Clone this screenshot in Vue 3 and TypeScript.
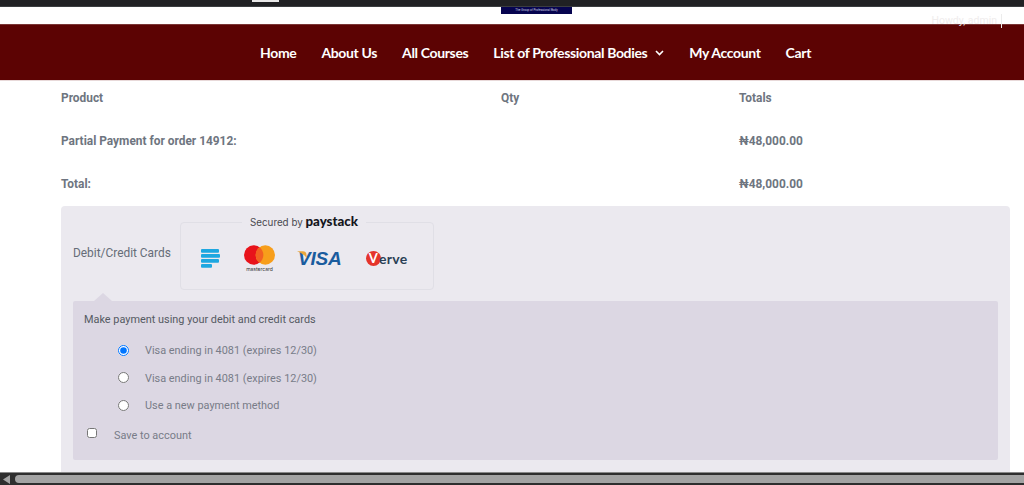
<script setup lang="ts">
const navItems = ['Home', 'About Us', 'All Courses']
const rows = [
  { name: 'Partial Payment for order 14912:', amount: '₦48,000.00' },
  { name: 'Total:', amount: '₦48,000.00' },
]
const options = [
  { label: 'Visa ending in 4081 (expires 12/30)', checked: true },
  { label: 'Visa ending in 4081 (expires 12/30)', checked: false },
  { label: 'Use a new payment method', checked: false },
]
</script>

<template>
  <div class="page">
    <div class="chrome"><i class="tab"></i></div>
    <div class="brand">
      <div class="logo"><span>The Group of Professional Body</span></div>
      <span class="howdy">Howdy, admin</span>
    </div>
    <nav class="nav">
      <a v-for="item in navItems" :key="item">{{ item }}</a>
      <a class="drop">List of Professional Bodies
        <svg width="9" height="6" viewBox="0 0 9 6"><path d="M1 1l3.500 3.500L8 1" fill="none" stroke="#fff" stroke-width="1.600" /></svg>
      </a>
      <a>My Account</a>
      <a>Cart</a>
    </nav>
    <main class="main">
      <div class="row head"><span>Product</span><span>Qty</span><span>Totals</span></div>
      <div v-for="r in rows" :key="r.name" class="row"><span>{{ r.name }}</span><span></span><span>{{ r.amount }}</span></div>
      <section class="pay">
        <div class="method">
          <span class="method-label">Debit/Credit Cards</span>
          <div class="secured">
            <div class="secured-title">Secured by <b>paystack</b></div>
            <div class="cards">
              <svg class="stack" width="19" height="19" viewBox="0 0 19 19">
                <g fill="#1ea7e0">
                  <rect x="0" y="0" width="18" height="3.800" rx="1" />
                  <rect x="0" y="5" width="19" height="3.800" rx="1" />
                  <rect x="0" y="10" width="18" height="3.800" rx="1" />
                  <rect x="0" y="15" width="11" height="3.800" rx="1" />
                </g>
              </svg>
              <div class="mc">
                <svg width="31" height="20" viewBox="0 0 32 20">
                  <circle cx="10" cy="10" r="10" fill="#e8131b" />
                  <circle cx="22" cy="10" r="10" fill="#f79e1b" />
                  <path d="M16 2a10 10 0 0 1 0 16a10 10 0 0 1 0-16z" fill="#f26122" />
                </svg>
                <span>mastercard</span>
              </div>
              <div class="visa"><svg class="flick" width="10" height="8" viewBox="0 0 12 9"><path d="M0 0h7.500q2.500 0 3.500 2l1 7q-3-6-12-9z" fill="#e9a63a" /></svg><span>VISA</span></div>
              <div class="verve"><i>V</i><span>erve</span></div>
            </div>
          </div>
        </div>
        <div class="panel">
          <p class="intro">Make payment using your debit and credit cards</p>
          <label v-for="(o, i) in options" :key="i" class="option">
            <input type="radio" name="card" :checked="o.checked" />
            <span>{{ o.label }}</span>
          </label>
          <label class="save">
            <input type="checkbox" />
            <span>Save to account</span>
          </label>
        </div>
      </section>
    </main>
    <div class="scrollbar">
      <svg width="8" height="9" viewBox="0 0 8 9"><path d="M7 0v9L0 4.500z" fill="#a3a3a3" /></svg>
      <div class="thumb"></div>
    </div>
  </div>
</template>

<style>
html, body { margin: 0; overflow: hidden; }
</style>

<style scoped>
.page {
  width: 1024px;
  height: 485px;
  display: flex;
  flex-direction: column;
  overflow: hidden;
  background: #fff;
  font-family: Roboto, "Liberation Sans", sans-serif;
  position: relative;
}
.chrome { height: 6px; background: #202124; flex: none; border-bottom: 1px solid #3a3d40; position: relative; }
.tab { position: absolute; left: 252px; top: 0; width: 27px; height: 2px; background: #e8e8e8; }
.brand { height: 17px; flex: none; display: flex; justify-content: center; position: relative; }
.logo {
  width: 71px;
  height: 7px;
  margin-left: 49px;
  background: #06044f;
  color: #cfcfe0;
  font-size: 3px;
  line-height: 7px;
  text-align: center;
  overflow: hidden;
  white-space: nowrap;
}
.howdy {
  position: absolute;
  right: 22px;
  top: 7px;
  padding-right: 4px;
  border-right: 1px solid #ececec;
  font-size: 10.500px;
  color: #f0eded;
  line-height: 14px;
}
.nav {
  flex: none;
  background: #5c0303;
  border-top: 1px solid #7a3535;
  border-bottom: 1px solid #e8d9d9;
  box-sizing: border-box;
  height: 57px;
  display: flex;
  align-items: center;
  justify-content: center;
  gap: 25px;
  padding-left: 47px;
  font-family: Lato, sans-serif;
  font-weight: 700;
  font-size: 14px;
  letter-spacing: -.35px;
  color: #fff;
}
.drop { display: flex; align-items: center; gap: 8px; }
.main { flex: 1; min-height: 0; padding-left: 61px; padding-right: 14px; overflow: hidden; }
.row {
  display: grid;
  grid-template-columns: 440px 238px 1fr;
  height: 43px;
  align-items: center;
  font-size: 11.900px;
  font-weight: 700;
  color: #6e7580;
}
.row.head { height: 34px; margin-bottom: 4px; }
.pay {
  margin-top: 1px;
  background: #ebe9ef;
  border-radius: 4px;
  padding: 16px 12px 0;
  height: 280px;
  box-sizing: border-box;
}
.method { display: flex; align-items: center; gap: 10px; height: 68px; position: relative; }
.method-label { font-size: 11.900px; color: #666d78; white-space: nowrap; width: 97px; margin-bottom: 6px; }
.secured {
  width: 254px;
  height: 68px;
  box-sizing: border-box;
  border: 1px solid #e0dfe6;
  border-radius: 4px;
  position: relative;
}
.secured-title {
  position: absolute;
  top: -9px;
  left: 61px;
  padding: 0 8px;
  background: #ebe9ef;
  font-family: Inter, sans-serif;
  font-size: 9.800px;
  line-height: 14px;
  color: #4a4a4f;
  white-space: nowrap;
}
.secured-title b { font-family: Lato, sans-serif; font-weight: 900; font-size: 13.300px; color: #14161c; }
.cards { display: flex; align-items: center; height: 100%; padding: 5px 0 0 20px; box-sizing: border-box; }
.stack { flex: none; margin-right: 24px; margin-top: -1px; }
.mc { display: flex; flex-direction: column; align-items: center; width: 31px; margin-right: 23px; }
.mc span { font-family: Inter, sans-serif; font-size: 5px; line-height: 6px; color: #333; margin-top: 1px; }
.visa { position: relative; width: 44px; margin-right: 24px; font-family: "Liberation Sans", sans-serif; font-style: italic; font-weight: 700; font-size: 19px; line-height: 18px; color: #1a5c9e; letter-spacing: -.2px; }
.flick { position: absolute; left: -1px; top: 1px; }
.verve { display: flex; align-items: center; font-family: Lato, sans-serif; font-weight: 700; font-size: 14px; color: #2a3f55; letter-spacing: .3px; }
.verve i {
  width: 15px;
  height: 15px;
  border-radius: 50%;
  background: #e5342b;
  color: #fff;
  font-style: normal;
  font-size: 13px;
  line-height: 15px;
  text-align: center;
  margin-right: -2px;
}
.panel {
  margin-top: 11px;
  height: 159px;
  background: #dcd7e3;
  border-radius: 2px;
  padding: 1px 11px 0;
  box-sizing: border-box;
  position: relative;
}
.panel::before {
  content: "";
  position: absolute;
  left: 21px;
  top: -8px;
  border-left: 9px solid transparent;
  border-right: 9px solid transparent;
  border-bottom: 8px solid #dcd7e3;
}
.intro { margin: 11px 0 10px; font-size: 10.900px; line-height: 14px; color: #555a62; }
.option, .save {
  display: flex;
  align-items: center;
  font-size: 10.900px;
  color: #787c88;
  height: 27.500px;
}
.option { padding-left: 34px; }
.save { height: 30px; padding-left: 3px; padding-top: 2px; box-sizing: border-box; }
input { margin: 0; width: 10px; height: 10px; flex: none; }
.option input { width: 11px; height: 11px; margin-top: -1px; }
.save input { margin-top: -5px; }
.option span { margin-left: 16px; }
.save span { margin-left: 17px; }
.scrollbar {
  height: 13px;
  flex: none;
  box-sizing: border-box;
  background: #2e2e2e;
  border-top: 1px solid #888;
  display: flex;
  align-items: center;
  padding: 0 0 0 3px;
  gap: 4px;
}
.thumb { flex: 1; height: 8px; background: #a3a3a3; border-radius: 4px 0 0 4px; }
</style>
